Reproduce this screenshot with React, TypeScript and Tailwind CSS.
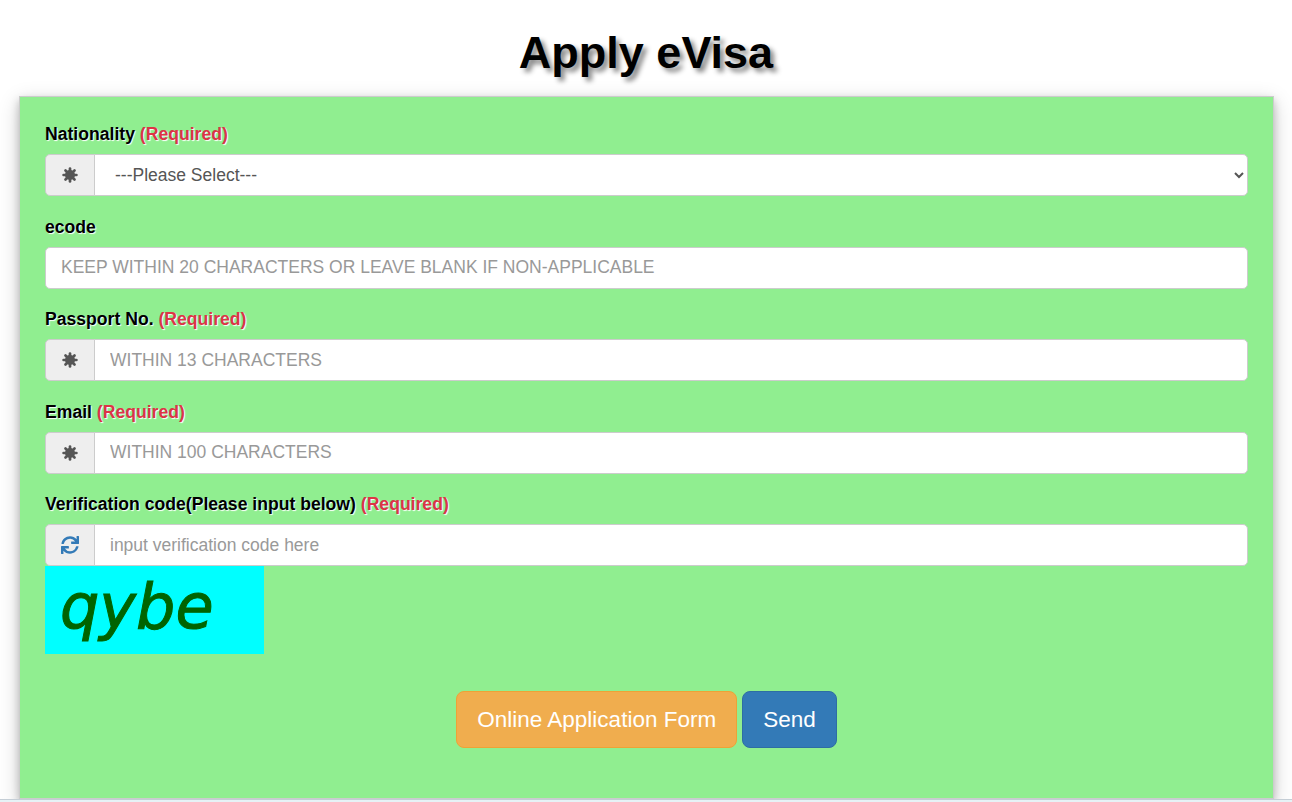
import { FaSync } from "react-icons/fa";

const AsteriskIcon = () => (
  <svg viewBox="0 0 16 16" className="h-[16px] w-[16px]" fill="#555">
    <circle cx="8" cy="8" r="5" />
    <g stroke="#555" strokeWidth="2.7" strokeLinecap="round">
      <path d="M8 1.6V14.4" />
      <path d="M1.6 8H14.4" />
      <path d="M3.5 3.5L12.5 12.5" />
      <path d="M12.5 3.5L3.5 12.5" />
    </g>
  </svg>
);

const Label = ({ text, required }: { text: string; required?: boolean }) => (
  <label className="block mb-[7px] h-[25px] leading-[25px] text-[17.6px] font-bold text-black [text-shadow:1px_1px_1px_#fff]">
    {text}
    {required && <span className="text-[#dc3545]"> (Required)</span>}
  </label>
);

const Addon = ({ children }: { children: React.ReactNode }) => (
  <span className="flex w-[50px] shrink-0 items-center justify-center rounded-l-[5px] border border-[#ccc] bg-[#eee]">
    {children}
  </span>
);

const inputClass =
  "h-full min-w-0 flex-1 border border-[#ccc] bg-white px-[15px] text-[17.5px] text-[#555] outline-none placeholder:text-[#999]";

const InputField = ({
  label,
  required,
  placeholder,
}: {
  label: string;
  required?: boolean;
  placeholder: string;
}) => (
  <div className="mb-[18.5px]">
    <Label text={label} required={required} />
    <div className="flex h-[42px]">
      <Addon>
        <AsteriskIcon />
      </Addon>
      <input className={`${inputClass} -ml-px rounded-r-[5px]`} placeholder={placeholder} />
    </div>
  </div>
);

export default function App() {
  return (
    <div className="flex h-[802px] flex-col overflow-hidden bg-white font-['Liberation_Sans',Arial,sans-serif]">
      <h1 className="flex h-[96px] shrink-0 items-start justify-center pt-[28px] text-[45px] leading-[50px] font-bold text-black [text-shadow:4px_4px_5px_#888]">
        Apply eVisa
      </h1>

      <div className="mx-[19px] h-[703px] w-[1255px] shrink-0 border border-[#ccc] bg-[#90ee90] px-[25px] pt-[25px] shadow-[0_4px_8px_0_rgba(0,0,0,0.2),0_6px_20px_0_rgba(0,0,0,0.19)]">
        <div className="mb-[18.5px]">
          <Label text="Nationality" required />
          <div className="flex h-[42px]">
            <Addon>
              <AsteriskIcon />
            </Addon>
            <select className={`${inputClass} -ml-px rounded-r-[5px] pl-[16px]`} defaultValue="">
              <option value="">---Please Select---</option>
            </select>
          </div>
        </div>

        <div className="mb-[18.5px]">
          <Label text="ecode" />
          <input
            className="h-[42px] w-full rounded-[5px] border border-[#ccc] bg-white px-[15px] text-[17.5px] text-[#555] outline-none placeholder:text-[#999]"
            placeholder="KEEP WITHIN 20 CHARACTERS OR LEAVE BLANK IF NON-APPLICABLE"
          />
        </div>

        <InputField label="Passport No." required placeholder="WITHIN 13 CHARACTERS" />
        <InputField label="Email" required placeholder="WITHIN 100 CHARACTERS" />

        <Label text="Verification code(Please input below)" required />
        <div className="flex h-[42px]">
          <Addon>
            <FaSync className="h-[18px] w-[18px] text-[#337ab7]" />
          </Addon>
          <input className={`${inputClass} -ml-px rounded-r-[5px]`} placeholder="input verification code here" />
        </div>

        <div className="flex h-[88px] w-[219px] items-start bg-[#00ffff] pl-[15px] font-['DejaVu_Sans',sans-serif] text-[62px] leading-[82px] text-[#006400] italic [-webkit-text-stroke:1px_#006400]">
          qybe
        </div>

        <div className="mt-[37px] flex justify-center gap-[5px]">
          <button className="h-[57px] rounded-[8px] border border-[#eea236] bg-[#f0ad4e] px-[20px] text-[22.5px] text-white">
            Online Application Form
          </button>
          <button className="h-[57px] rounded-[8px] border border-[#2e6da4] bg-[#337ab7] px-[20px] text-[22.5px] text-white">
            Send
          </button>
        </div>
      </div>

      <div className="h-[3px] shrink-0 border-t border-[#c5ced6] bg-[#e6f2f6]" />
    </div>
  );
}
